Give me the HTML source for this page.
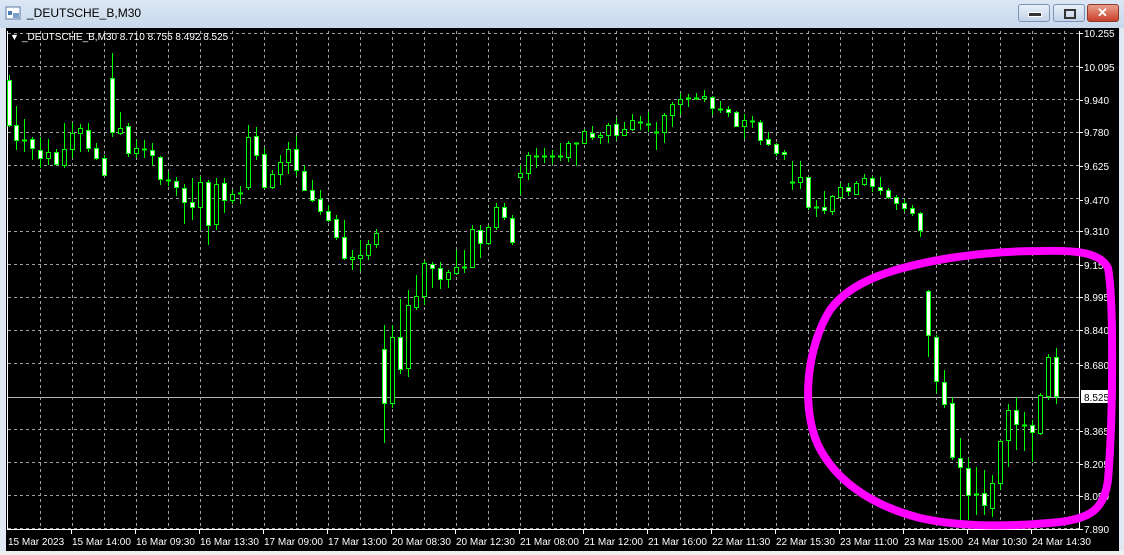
<!DOCTYPE html>
<html><head><meta charset="utf-8"><style>
body{margin:0;width:1124px;height:555px;overflow:hidden;background:#dfe8f3;font-family:"Liberation Sans",sans-serif}
#t{position:absolute;left:0;top:0;width:1124px;height:28px;background:linear-gradient(#dce7f4,#c8d8ec)}
#t span{position:absolute;left:27px;top:6px;font-size:12px;color:#000}
.b{position:absolute;top:4px;height:16px;width:30px;border:1px solid #7d93b4;border-radius:3px;background:linear-gradient(#e8f0fa,#c3d3e8)}
svg{position:absolute;left:0;top:0}
</style></head><body>
<div id="t"><svg width="20" height="20" style="left:5px;top:5px"><rect x="1" y="2" width="14" height="12" fill="#fff" stroke="#5a7aa6"/><rect x="3" y="6" width="4" height="4" fill="#4a7ab0"/><rect x="8" y="8" width="6" height="5" fill="#7aa0c8"/></svg><span>_DEUTSCHE_B,M30</span></div>
<div class="b" style="left:1018px"><div style="position:absolute;left:9px;top:7px;width:12px;height:3px;background:#333;border:1px solid #fff"></div></div>
<div class="b" style="left:1053px"><div style="position:absolute;left:10px;top:4px;width:8px;height:6px;border:2px solid #333"></div></div>
<div class="b" style="left:1087px;border-color:#8b3a2a;background:linear-gradient(#e9a08c,#c8402a)"><div style="position:absolute;left:9px;top:0px;color:#fff;font-weight:bold;font-size:13px">✕</div></div>
<svg id="s" width="1124" height="555"></svg>
<script>
var S='<rect x="6" y="28" width="1113" height="523" fill="#000"/>';
S+='<rect x="0" y="551" width="1124" height="4" fill="#f0f0f0"/>';
for(var x=40;x<1079;x+=32)S+='<line x1="'+(x+.5)+'" y1="31" x2="'+(x+.5)+'" y2="529" stroke="#a0a0a0" stroke-dasharray="3 3"/>';
for(var y=33;y<529;y+=33)if(y!=396)S+='<line x1="8" y1="'+(y+.5)+'" x2="1079" y2="'+(y+.5)+'" stroke="#a0a0a0" stroke-dasharray="3 3"/>';
S+='<line x1="8" y1="397.5" x2="1079" y2="397.5" stroke="#b0b0b0"/>';
S+='<polyline points="7.5,31 7.5,529.5 1079.5,529.5 1079.5,31" fill="none" stroke="#fff"/>';
var P=[[33,"10.255"],[67,"10.095"],[100,"9.940"],[132,"9.780"],[166,"9.625"],[200,"9.470"],[231,"9.310"],[265,"9.155"],[297,"8.995"],[330,"8.840"],[365,"8.680"],[431,"8.365"],[464,"8.205"],[496,"8.050"],[529,"7.890"]];
P.forEach(function(p){S+='<line x1="1079" y1="'+(p[0]+.5)+'" x2="1083" y2="'+(p[0]+.5)+'" stroke="#fff"/><text x="1084" y="'+(p[0]+4)+'" font-size="10" fill="#fff">'+p[1]+'</text>';});
S+='<rect x="1081" y="390" width="29" height="13" fill="#fff"/><text x="1084" y="401" font-size="10" fill="#000">8.525</text>';
var D=["15 Mar 2023","15 Mar 14:00","16 Mar 09:30","16 Mar 13:30","17 Mar 09:00","17 Mar 13:00","20 Mar 08:30","20 Mar 12:30","21 Mar 08:00","21 Mar 12:00","21 Mar 16:00","22 Mar 11:30","22 Mar 15:30","23 Mar 11:00","23 Mar 15:00","24 Mar 10:30","24 Mar 14:30"];
D.forEach(function(d,i){var x=7+64*i;if(i)S+='<line x1="'+(x+.5)+'" y1="529" x2="'+(x+.5)+'" y2="534" stroke="#fff"/>';S+='<text x="'+(x+1)+'" y="545" font-size="10" fill="#fff">'+d+'</text>';});
S+='<text x="10" y="40" font-size="9" fill="#fff">▼</text><text x="22" y="40" font-size="10" fill="#fff">_DEUTSCHE_B,M30  8.710 8.755 8.492 8.525</text>';
// x,top,bottom,high,low,white
var C=[[9,80,125,75,127,1],[16,125,140,106,150,1],[24,140,140,119,152,0],[32,139,148,137,160,1],[40,150,158,137,168,1],[48,152,158,139,165,0],[56,152,164,149,165,1],[64,149,165,123,168,0],[72,133,149,123,158,0],[80,128,133,124,152,0],[88,130,148,123,152,1],[96,148,158,143,160,1],[104,158,175,155,176,1],[112,78,132,53,137,1],[120,128,133,112,135,0],[128,126,153,123,157,1],[136,148,153,140,158,0],[144,149,149,140,158,0],[152,150,155,143,166,1],[160,157,179,156,185,1],[168,180,180,172,186,0],[176,181,187,177,196,1],[184,188,202,184,224,1],[192,202,207,178,220,1],[200,182,207,176,230,0],[208,182,225,180,245,1],[216,184,224,178,230,0],[224,183,200,178,213,1],[232,194,200,190,204,0],[240,193,193,186,204,0],[248,137,187,125,190,0],[256,136,155,127,160,1],[264,154,187,148,189,1],[272,174,187,170,189,0],[280,162,174,155,185,0],[288,149,162,142,174,0],[296,149,170,136,176,1],[304,171,190,165,190,1],[312,190,200,180,202,1],[320,199,211,190,215,1],[328,211,220,205,222,1],[336,219,237,215,240,1],[344,237,258,220,260,1],[352,257,259,250,270,0],[360,255,258,240,271,0],[368,244,255,240,260,0],[376,233,244,229,248,0],[384,349,403,325,443,1],[392,337,403,325,408,0],[400,337,369,299,374,1],[408,305,368,290,377,0],[416,296,307,275,310,0],[424,263,296,260,305,0],[432,264,268,262,288,1],[440,268,279,262,289,1],[448,272,279,270,288,0],[456,267,273,250,275,0],[464,267,267,250,273,0],[472,229,267,225,268,0],[480,230,243,225,258,1],[488,227,243,225,245,0],[496,207,227,203,230,0],[504,207,217,203,220,1],[512,218,242,215,245,1],[520,173,177,165,195,0],[528,155,173,152,180,0],[536,156,156,148,168,0],[544,156,156,148,163,0],[552,156,156,150,164,0],[560,156,156,143,161,0],[568,143,157,141,162,0],[576,143,143,143,166,0],[584,131,143,129,144,0],[592,133,137,126,140,1],[600,135,137,132,144,0],[608,125,135,123,143,0],[616,124,135,118,140,1],[624,129,135,122,136,0],[632,120,129,114,131,0],[640,122,123,116,130,0],[648,124,124,112,132,0],[656,132,132,122,150,0],[664,115,132,113,143,0],[672,104,115,102,127,0],[680,99,104,93,115,0],[688,98,98,94,107,0],[696,98,98,93,100,0],[704,96,98,90,102,0],[712,97,108,96,115,1],[720,109,109,101,113,0],[728,109,112,106,117,1],[736,112,126,111,127,1],[744,120,126,114,139,0],[752,121,121,116,128,0],[760,122,140,120,145,1],[768,139,144,132,146,1],[776,144,153,143,156,1],[784,152,154,150,160,1],[792,182,182,161,190,0],[800,177,182,161,189,0],[808,177,207,177,210,1],[816,207,207,200,217,0],[824,207,210,191,214,1],[832,196,211,195,215,0],[840,187,197,183,199,0],[848,187,191,183,196,1],[856,183,194,181,195,0],[864,178,184,174,186,0],[872,178,186,176,192,1],[880,187,190,177,195,1],[888,190,197,188,199,1],[896,197,203,195,210,1],[904,203,208,199,212,1],[912,208,213,205,216,1],[920,213,230,212,237,1],[928,291,335,290,357,1],[936,337,381,335,393,1],[944,382,404,370,408,1],[952,403,457,397,460,1],[960,458,467,438,521,1],[968,468,495,458,520,1],[976,494,494,467,515,0],[984,493,505,470,515,1],[992,483,508,475,517,0],[1000,441,483,440,490,0],[1008,410,440,404,467,0],[1016,410,424,397,450,1],[1024,425,425,412,451,0],[1032,425,432,420,462,1],[1040,395,433,393,435,0],[1048,357,396,354,400,0],[1056,357,396,348,404,1]];
C.forEach(function(c){var x=c[0];S+='<line x1="'+(x+.5)+'" y1="'+c[3]+'" x2="'+(x+.5)+'" y2="'+c[4]+'" stroke="#00ff00"/>';
if(c[2]-c[1]<2)S+='<line x1="'+(x-2)+'" y1="'+(c[1]+.5)+'" x2="'+(x+3)+'" y2="'+(c[1]+.5)+'" stroke="#00ff00" stroke-width="2"/>';
else S+='<rect x="'+(x-1.5)+'" y="'+(c[1]+.5)+'" width="4" height="'+(c[2]-c[1])+'" fill="'+(c[5]?'#fff':'#000')+'" stroke="#00ff00"/>';});
S+='<path d="M1040,251 C1075,250 1100,252 1108,268 C1114,300 1113,420 1108,480 C1104,510 1090,518 1060,522 C1010,527 960,527 920,518 C870,505 835,480 818,445 C800,405 808,345 830,310 C850,282 890,268 950,258 C990,252 1020,251 1040,251 Z" fill="none" stroke="#ff00ff" stroke-width="8"/>';
S+='<path d="M1040,249 L1080,248 L1085,255 L1040,254Z" fill="#ff00ff"/>';
document.getElementById('s').innerHTML=S;
</script>
</body></html>
